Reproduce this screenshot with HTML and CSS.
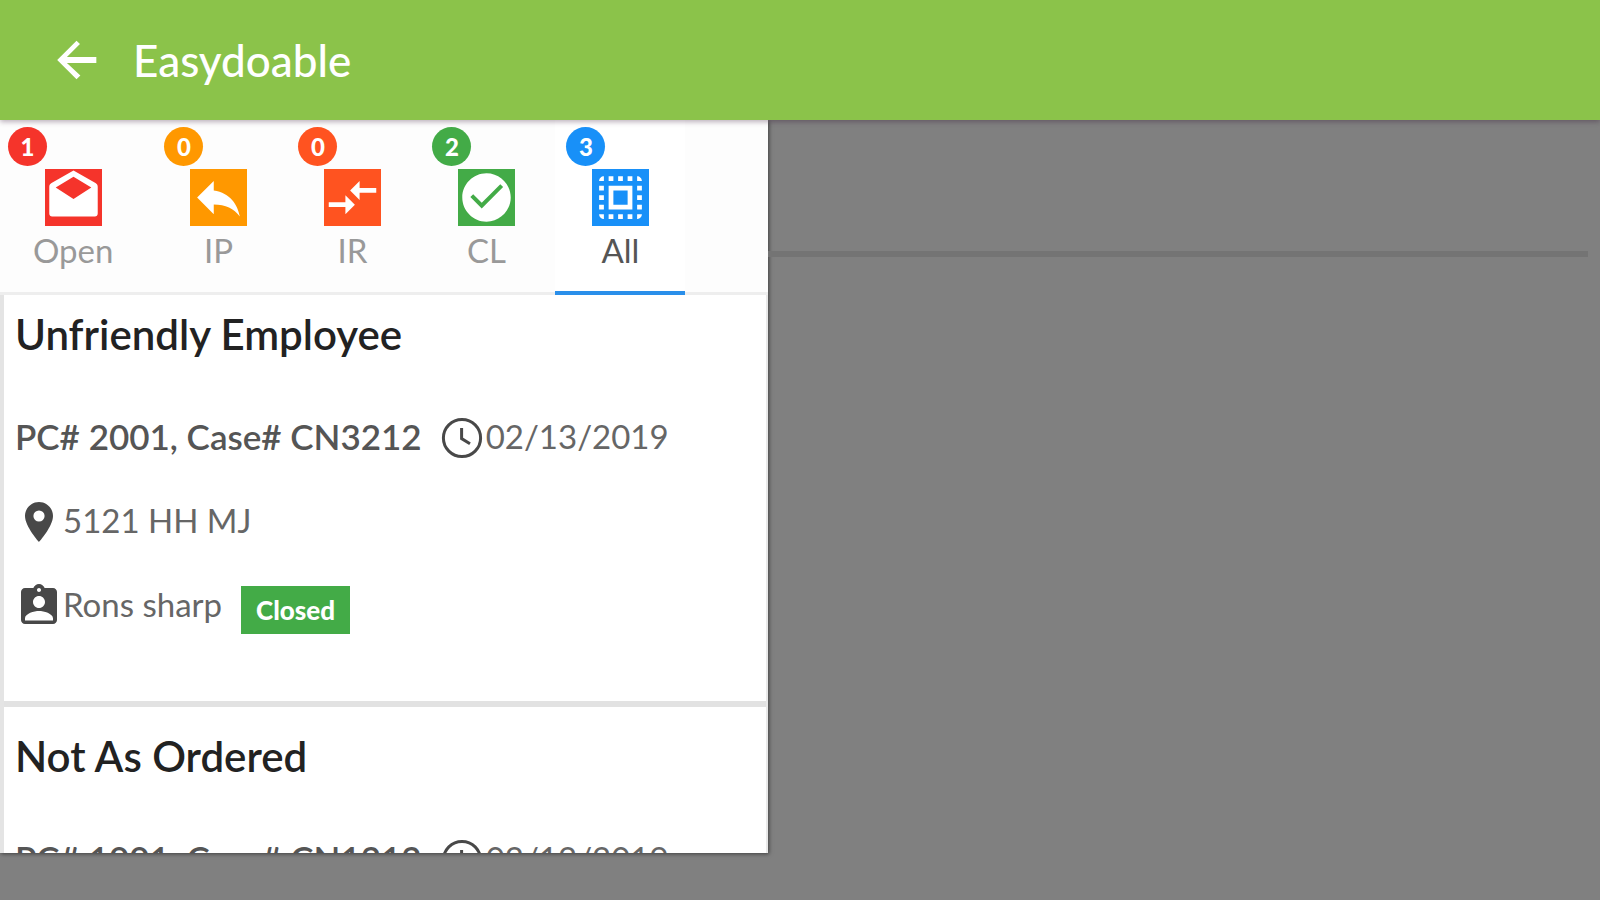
FILE: index.html
```html
<!DOCTYPE html>
<html lang="en">
<head>
    <meta charset="UTF-8">
    <meta name="viewport" content="width=device-width, initial-scale=1.0">
    <title>Easydoable</title>
    <link rel="stylesheet" href="styles.css">
</head>
<body>
    <header class="toolbar">
        <button class="back" type="button" aria-label="Back">
            <svg viewBox="0 0 24 24"><path d="M20 10.8H7.83l5.4-5.4L11.8 4l-8 8 8 8 1.6-1.6L7.83 13.2H20v-2.4z"/></svg>
        </button>
        <h1>Easydoable</h1>
    </header>

    <main class="page">
        <section class="panel">
            <nav class="tabs" role="tablist">
                <button class="tab open" type="button" role="tab">
                    <span class="count">1</span>
                    <svg class="tab-icon" viewBox="0 0 24 24"><path d="M22.2 7.5c0-.72-.37-1.2-.94-1.6L12 .6 2.75 5.9C2.18 6.3 1.8 6.78 1.8 7.5v11.2c0 .7.5 1.3 1.2 1.3h18c.7 0 1.2-.6 1.2-1.3V7.5zM12 12.6L4.5 7.84 12 3.3l7.5 4.54L12 12.6z"/></svg>
                    <span class="tab-label">Open</span>
                </button>
                <button class="tab progress" type="button" role="tab">
                    <span class="count">0</span>
                    <svg class="tab-icon" viewBox="0 0 24 24"><path d="M10 9V5l-7 7 7 7v-4.1c5 0 8.5 1.6 11 5.1-1-5-4-10-11-11z"/></svg>
                    <span class="tab-label">IP</span>
                </button>
                <button class="tab review" type="button" role="tab">
                    <span class="count">0</span>
                    <svg class="tab-icon" viewBox="0 0 24 24"><path d="M9.01 14H2v2h7.01v3L13 15l-3.99-4v3zm5.98-1v-3H22V8h-7.01V5L11 9l3.99 4z"/></svg>
                    <span class="tab-label">IR</span>
                </button>
                <button class="tab closed" type="button" role="tab">
                    <span class="count">2</span>
                    <svg class="tab-icon" viewBox="0 0 24 24"><path d="M12 1.8C6.4 1.8 1.8 6.4 1.8 12S6.4 22.2 12 22.2 22.2 17.6 22.2 12 17.6 1.8 12 1.8zm-2 14.8l-4.8-4.8 1.2-1.2 3.6 3.6 7.8-7.8 1.2 1.2-9 9z"/></svg>
                    <span class="tab-label">CL</span>
                </button>
                <button class="tab all active" type="button" role="tab" aria-selected="true">
                    <span class="count">3</span>
                    <svg class="tab-icon" viewBox="0 0 24 24"><path d="M3 5h2V3c-1.1 0-2 .9-2 2zm0 8h2v-2H3v2zm4 8h2v-2H7v2zM3 9h2V7H3v2zm10-6h-2v2h2V3zm6 0v2h2c0-1.1-.9-2-2-2zM5 21v-2H3c0 1.1.9 2 2 2zm-2-4h2v-2H3v2zM9 3H7v2h2V3zm2 18h2v-2h-2v2zm8-8h2v-2h-2v2zm0 8c1.1 0 2-.9 2-2h-2v2zm0-12h2V7h-2v2zm0 8h2v-2h-2v2zm-4 4h2v-2h-2v2zm0-16h2V3h-2v2zM7 17h10V7H7v10zm2-8h6v6H9V9z"/></svg>
                    <span class="tab-label">All</span>
                </button>
            </nav>

            <div class="cases">
                <article class="case">
                    <h2>Unfriendly Employee</h2>
                    <div class="row">
                        <strong>PC# 2001, Case# CN3212</strong>
                        <svg class="icon clock" viewBox="0 0 24 24"><circle cx="12" cy="12" r="9.3"/><path d="M11.8 7v5.3l4.2 2.6"/></svg>
                        <span class="text">02/13/2019</span>
                    </div>
                    <div class="row">
                        <svg class="icon" viewBox="0 0 24 24"><path d="M12 2C8.13 2 5 5.13 5 9c0 5.25 7 13 7 13s7-7.75 7-13c0-3.87-3.13-7-7-7zm0 9.8a2.8 2.8 0 1 1 0-5.6 2.8 2.8 0 0 1 0 5.6z"/></svg>
                        <span class="text">5121 HH MJ</span>
                    </div>
                    <div class="row">
                        <svg class="icon" viewBox="0 0 24 24"><path d="M19 3h-4.18C14.4 1.84 13.3 1 12 1c-1.3 0-2.4.84-2.82 2H5c-1.1 0-2 .9-2 2v14c0 1.1.9 2 2 2h14c1.1 0 2-.9 2-2V5c0-1.1-.9-2-2-2zm-7 0c.55 0 1 .45 1 1s-.45 1-1 1-1-.45-1-1 .45-1 1-1zm0 4c1.66 0 3 1.34 3 3s-1.34 3-3 3-3-1.34-3-3 1.34-3 3-3zm7 12.3H5v-1.2c0-2.3 4.6-3.6 7-3.6s7 1.3 7 3.6v1.2z"/></svg>
                        <span class="text">Rons sharp</span>
                        <span class="status">Closed</span>
                    </div>
                </article>

                <article class="case">
                    <h2>Not As Ordered</h2>
                    <div class="row">
                        <strong>PC# 1001, Case# CN1212</strong>
                        <svg class="icon clock" viewBox="0 0 24 24"><circle cx="12" cy="12" r="9.3"/><path d="M11.8 7v5.3l4.2 2.6"/></svg>
                        <span class="text">02/12/2019</span>
                    </div>
                </article>
            </div>
        </section>

        <div class="content">
            <hr>
        </div>
    </main>
</body>
</html>
```
FILE: styles.css
```css
* {
    box-sizing: border-box;
}

body {
    margin: 0;
    height: 100vh;
    display: flex;
    flex-direction: column;
    overflow: hidden;
    background-color: #808080;
    color: #666;
    font-family: Lato, "Open Sans", sans-serif;
    font-size: 33px;
}

button {
    border: none;
    padding: 0;
    background: none;
    font: inherit;
    cursor: pointer;
}

/* top bar */
.toolbar {
    display: flex;
    align-items: center;
    gap: 27px;
    height: 120px;
    flex-shrink: 0;
    padding: 0 48px;
    background-color: #8bc34a;
    box-shadow: 0 2px 5px rgba(40, 0, 40, 0.3);
    z-index: 2;
}

.toolbar h1 {
    margin: 0;
    color: white;
    font-size: 44px;
    font-weight: 500;
}

.back svg {
    display: block;
    width: 58px;
    height: 58px;
    fill: white;
}

.page {
    flex: 1;
    min-height: 0;
    display: flex;
    padding-bottom: 47px;
}

.panel {
    width: 48%;
    display: flex;
    flex-direction: column;
    overflow: hidden;
    background-color: white;
    box-shadow: 1px 1px 4px rgba(0, 0, 0, 0.5);
}

.content {
    flex: 1;
    padding: 131px 12px 0 0;
}

.content hr {
    margin: 0;
    border: none;
    height: 6px;
    background-color: #747474;
}

/* tabs */
.tabs {
    display: flex;
    gap: 4px;
    flex-shrink: 0;
    height: 175px;
    margin-left: -3px;
    background-color: #fdfdfd;
    border-bottom: 3px solid #eee;
}

.tab {
    position: relative;
    display: flex;
    flex-direction: column;
    align-items: center;
    min-width: 130px;
    height: 175px;
    padding: 49px 36px 0;
    color: #999;
    border-bottom: 4px solid transparent;
}

.tab.active {
    background-color: white;
    border-bottom-color: #2a8fea;
    color: #555;
}

.tab-icon {
    flex-shrink: 0;
    width: 57px;
    height: 57px;
    fill: white;
}

.tab-label {
    line-height: 48px;
}

.count {
    position: absolute;
    top: 7px;
    left: 11px;
    width: 39px;
    border-radius: 50%;
    color: white;
    font-size: 24px;
    font-weight: 900;
    line-height: 39px;
    text-align: center;
}

.open .count, .open .tab-icon {
    background-color: #f5342b;
}

.progress .count, .progress .tab-icon {
    background-color: #ff9800;
}

.review .count, .review .tab-icon {
    background-color: #ff5320;
}

.closed .count, .closed .tab-icon {
    background-color: #43ab47;
}

.all .count, .all .tab-icon {
    background-color: #1890f8;
}

/* case list */
.cases {
    flex: 1;
    overflow: hidden;
    border-left: 4px solid #e4e4e4;
    border-right: 2px solid #e8e8e8;
}

.case {
    padding: 25px 11px 53px;
    border-bottom: 6px solid #e2e2e2;
}

.case:first-child {
    padding-top: 15px;
}

.case h2 {
    margin: 0 0 38px;
    color: #222;
    font-size: 42px;
    font-weight: 600;
    line-height: 48px;
}

.row {
    display: flex;
    align-items: center;
    height: 84px;
    white-space: nowrap;
}

.row strong {
    margin-right: 16px;
    padding-bottom: 4px;
    color: #555;
    font-size: 35px;
    font-weight: 600;
}

.text {
    padding-bottom: 4px;
}

.icon {
    flex-shrink: 0;
    width: 48px;
    height: 48px;
    fill: #484848;
}

.clock {
    fill: none;
    stroke: #484848;
    stroke-width: 1.5;
}

.status {
    margin: 8px 0 0 19px;
    padding: 0 15px;
    background-color: #43ab47;
    color: white;
    font-size: 26px;
    font-weight: 900;
    line-height: 48px;
}
```
